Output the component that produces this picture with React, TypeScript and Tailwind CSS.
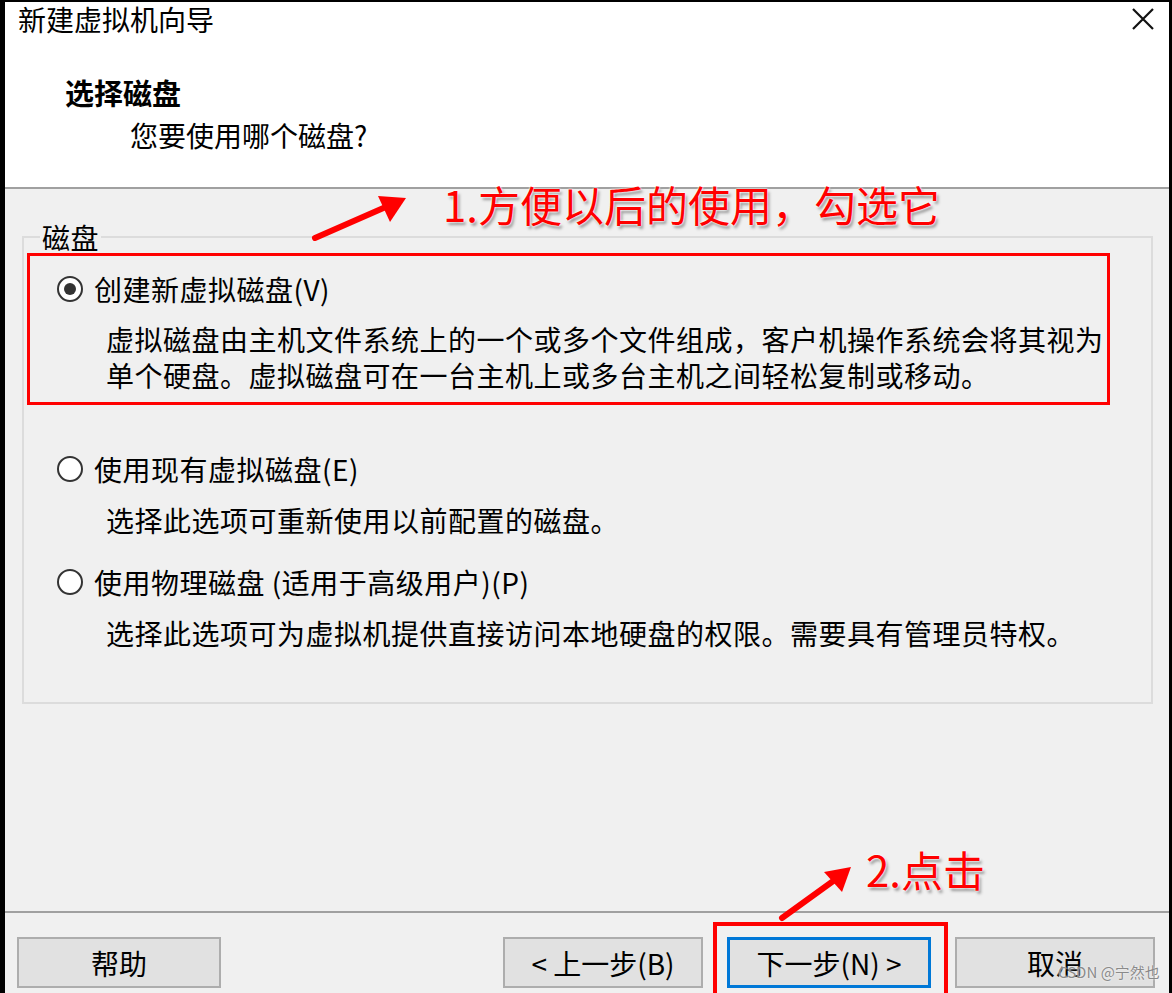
const font = "font-['Noto_Sans_CJK_SC','Noto_Sans',sans-serif]";

function Radio({ checked }: { checked?: boolean }) {
  return (
    <span className="flex h-[26px] w-[26px] shrink-0 items-center justify-center rounded-full border-2 border-[#333] bg-white">
      {checked && <span className="h-[12px] w-[12px] rounded-full bg-[#333]" />}
    </span>
  );
}

function Btn({ label, primary, wide }: { label: string; primary?: boolean; wide?: boolean }) {
  if (primary) {
    return (
      <div className="flex h-[51px] w-[204px] items-center justify-center border-[3px] border-[#0078d7] bg-[#e1e1e1] text-[28px] leading-none">
        {label}
      </div>
    );
  }
  return (
    <div
      className={
        wide
          ? 'flex h-[51px] w-[204px] items-center justify-center border-2 border-[#adadad] bg-[#e1e1e1] text-[28px] leading-none'
          : 'flex h-[51px] w-[200px] items-center justify-center border-2 border-[#adadad] bg-[#e1e1e1] text-[28px] leading-none'
      }
    >
      {label}
    </div>
  );
}

function Annotations() {
  return (
    <>
      <svg className="pointer-events-none absolute left-0 top-0" width={1172} height={993}>
        <line x1={315} y1={238} x2={388} y2={206} stroke="#ff0000" strokeWidth={6} strokeLinecap="round" />
        <polygon points="406,198 378,196 390,222" fill="#ff0000" />
        <line x1={782} y1={918} x2={836} y2={879} stroke="#ff0000" strokeWidth={6} strokeLinecap="round" />
        <polygon points="851,867 824,872 842,892" fill="#ff0000" />
      </svg>
      <div className="pointer-events-none absolute left-[443px] top-[180px] whitespace-nowrap text-[42px] font-normal leading-[48px] text-[#ff0000] [text-shadow:0_0_2px_#fff,0_0_2px_#fff,2px_3px_3px_#9a9a9a]">
        1.方便以后的使用，勾选它
      </div>
      <div className="pointer-events-none absolute left-[866px] top-[845px] whitespace-nowrap text-[42px] font-normal leading-[48px] text-[#ff0000] [text-shadow:0_0_2px_#fff,0_0_2px_#fff,2px_3px_3px_#9a9a9a]">
        2.点击
      </div>
      <div className="pointer-events-none absolute left-[713px] top-[922px] h-[90px] w-[235px] border-4 border-[#ff0000]" />
      <div className="pointer-events-none absolute left-[1058px] top-[962px] whitespace-nowrap text-[15px] leading-[20px] text-[#8a8a8a] [text-shadow:0_0_2px_#fff]">
        CSDN @宁然也
      </div>
    </>
  );
}

export default function App() {
  return (
    <div className={`relative h-[993px] w-[1172px] overflow-hidden bg-white text-black ${font}`}>
      <div className="flex h-[993px] w-[1172px] flex-col border-l-[5px] border-r-[3px] border-t-2 border-black bg-[#f0f0f0]">
        {/* header */}
        <div className="h-[185px] shrink-0 bg-white">
          <div className="flex h-[34px] items-center justify-between pl-[13px] pr-[14px]">
            <span className="text-[28px] leading-[34px]">新建虚拟机向导</span>
            <svg width={24} height={24} viewBox="0 0 24 24">
              <path d="M2 2 L22 22 M22 2 L2 22" stroke="#111" strokeWidth={2.2} />
            </svg>
          </div>
          <div className="mt-[38px] pl-[60px] text-[29px] font-bold leading-[36px]">选择磁盘</div>
          <div className="mt-[7px] pl-[125px] text-[28px] leading-[36px]">您要使用哪个磁盘?</div>
        </div>
        <div className="h-[2px] shrink-0 bg-[#a0a0a0]" />

        {/* body */}
        <div className="h-[722px] shrink-0 pt-[33px]">
          <fieldset className="ml-[17px] h-[482px] w-[1131px] border-2 border-[#dcdcdc] p-0 text-[28px] tracking-[0.5px]">
            <legend className="ml-[16px] px-[2px] text-[28px] leading-[30px]">磁盘</legend>

            <div className="ml-[3px] mt-[1px] w-[1083px] border-[3px] border-[#ff0000] pb-[9px] pl-[27px] pt-[15px]">
              <div className="flex h-[36px] items-center gap-[11px]">
                <Radio checked />
                <span className="leading-[36px]">创建新虚拟磁盘(V)</span>
              </div>
              <div className="mt-[14px] whitespace-nowrap pl-[49px] leading-[36px]">
                <div>虚拟磁盘由主机文件系统上的一个或多个文件组成，客户机操作系统会将其视为</div>
                <div>单个硬盘。虚拟磁盘可在一台主机上或多台主机之间轻松复制或移动。</div>
              </div>
            </div>

            <div className="ml-[33px] mt-[46px] flex h-[36px] items-center gap-[11px]">
              <Radio />
              <span className="leading-[36px]">使用现有虚拟磁盘(E)</span>
            </div>
            <div className="mt-[15px] whitespace-nowrap pl-[82px] leading-[36px]">选择此选项可重新使用以前配置的磁盘。</div>

            <div className="ml-[33px] mt-[26px] flex h-[36px] items-center gap-[11px]">
              <Radio />
              <span className="leading-[36px]">使用物理磁盘 (适用于高级用户)(P)</span>
            </div>
            <div className="mt-[15px] whitespace-nowrap pl-[82px] leading-[36px]">
              选择此选项可为虚拟机提供直接访问本地硬盘的权限。需要具有管理员特权。
            </div>
          </fieldset>
        </div>
        <div className="h-[2px] shrink-0 bg-[#a0a0a0]" />

        {/* buttons */}
        <div className="flex items-start justify-between pl-[12px] pr-[14px] pt-[24px]">
          <Btn label="帮助" wide />
          <div className="flex gap-[24px]">
            <Btn label="< 上一步(B)" />
            <Btn label="下一步(N) >" primary />
            <Btn label="取消" />
          </div>
        </div>
      </div>
      <Annotations />
    </div>
  );
}
